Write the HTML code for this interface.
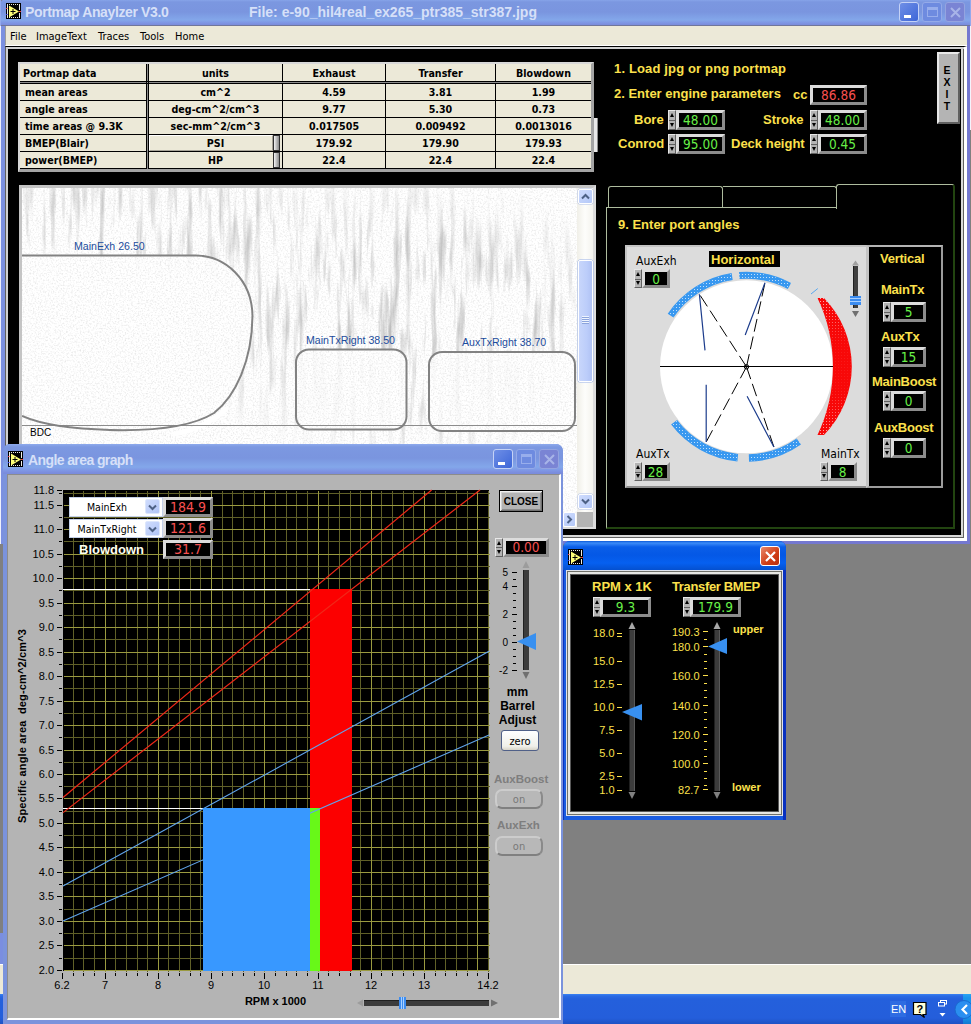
<!DOCTYPE html>
<html><head><meta charset="utf-8"><title>Portmap Anaylzer V3.0</title>
<style>
*{box-sizing:border-box;margin:0;padding:0}
html,body{width:971px;height:1024px;overflow:hidden;background:#808080}
body{position:relative;font-family:"DejaVu Sans Condensed","Liberation Sans",sans-serif;font-size:11px;color:#000}
.a{position:absolute}
.t{position:absolute;white-space:nowrap;line-height:1}
.lb{font-family:"Liberation Sans",sans-serif;font-weight:bold}
.tc{background:#ece9d8;font-family:"DejaVu Sans Condensed","Liberation Sans",sans-serif;font-weight:bold;font-size:10.600px;white-space:nowrap;overflow:hidden}
.y{color:#fce04c}
.num{position:absolute;background:#000;border:3px solid;border-color:#dcdcdc #8c8c8c #8c8c8c #dcdcdc;text-align:center;white-space:nowrap;overflow:hidden;font-size:13.500px;line-height:14px}
.g{color:#68f048}
.r{color:#f85050}
.spin{position:absolute;width:8px;background:#b4b4b4;border:1px solid;border-color:#e8e8e8 #606060 #606060 #e8e8e8}
.spin:before,.spin:after{content:"";position:absolute;left:0.500px;border-left:2.500px solid transparent;border-right:2.500px solid transparent}
.spin:before{top:2px;border-bottom:4px solid #000}
.spin:after{bottom:2px;border-top:4px solid #000}
.spin i{position:absolute;left:0;right:0;top:50%;height:1px;background:#606060}
/* XP window chrome */
.win{position:absolute;overflow:hidden}
.title{position:absolute;left:0;top:0;right:0}
.cap{position:absolute;white-space:nowrap;font-family:"Liberation Sans",sans-serif;font-weight:bold;font-size:14px;line-height:1}
.wb{position:absolute;width:20px;height:20px;border-radius:3px;border:1px solid #fff}
</style></head>
<body>
<!-- desktop / MDI background, status strip and taskbar -->
<div class="a" style="left:0;top:964px;width:971px;height:30px;background:#ece9d8;border-top:1px solid #fff"></div>
<div class="a" style="left:0;top:994px;width:971px;height:30px;background:linear-gradient(#3a82f2 0,#2a6ae4 2px,#2460dc 5px,#245edb 24px,#1e52c4 30px)"></div>
<div class="a" style="left:0;top:933px;width:4px;height:31px;background:#7a8ee0"></div>
<div class="a" style="left:963px;top:994px;width:8px;height:30px;background:linear-gradient(#2aa4f4 0,#1a94ec 4px,#1890e8 24px,#147ad0 30px)"></div>
<div class="a" style="left:890px;top:1001px;width:16px;height:16px;background:#2e6ce2"></div>
<div class="t" style="left:891px;top:1004px;font-size:11px;color:#fff;font-family:'Liberation Sans',sans-serif">EN</div>
<svg class="a" style="left:912px;top:1001px" width="16" height="18" viewBox="0 0 16 18"><path d="M1.500 1.500H14V13.500H11L12.500 16.500L8.500 13.500H1.500Z" fill="#ffffd8" stroke="#000" stroke-width="1.200"/><text x="7.800" y="11.500" text-anchor="middle" font-family="Liberation Sans, sans-serif" font-weight="bold" font-size="11" fill="#000">?</text></svg>
<svg class="a" style="left:937px;top:999px" width="12" height="20" viewBox="0 0 12 20"><rect x="3.500" y="1.500" width="6" height="3.500" fill="none" stroke="#fff" stroke-width="1"/><rect x="1.500" y="3.500" width="6" height="3.500" fill="#245edb" stroke="#fff" stroke-width="1"/><path d="M2.500 14h6l-3 3.500z" fill="#fff"/></svg>
<svg class="a" style="left:954px;top:999px" width="17" height="21" viewBox="954 999 17 21"><circle cx="964" cy="1009.500" r="9" fill="#2a8ef0" stroke="#1a6ad0" stroke-width="1"/><path d="M967 1005L962.500 1009.500L967 1014" fill="none" stroke="#fff" stroke-width="2.200"/></svg>
<!-- ================= MAIN WINDOW (inactive) ================= -->
<div class="win" id="mainwin" style="left:0;top:0;width:971px;height:544px">
  <div class="a" style="left:0;top:0;width:971px;height:544px;background:#808080"></div>
  <div class="a" style="left:970px;top:0;width:1px;height:130px;background:linear-gradient(#93a9ec 0,#93a9ec 26px,#f4f4fc 26px)"></div>
  <div class="a" style="left:0;top:0;width:1px;height:544px;background:linear-gradient(#93a9ec 0,#93a9ec 26px,#eef0fc 26px)"></div>
  <div class="a" style="left:1px;top:0;width:969px;height:544px;background:linear-gradient(90deg,#7b90e0 0,#7b90e0 6px,#7478d0 7px);border-radius:3px 0 0 0"></div>
  <div class="title" style="left:1px;right:1px;height:26px;border-radius:3px 0 0 0;background:linear-gradient(#86a4e9 0,#7b97e0 2px,#7a95df 12px,#83a7ea 20px,#7e94e3 23px,#7a8cdc 25px,#70769a 25px,#70769a 26px)"></div>
  <svg class="a" style="left:6px;top:3px" width="15" height="16" viewBox="0 0 15 16"><rect width="15" height="16" fill="#000"/><rect x="1" y="1" width="1" height="14" fill="#ecece4"/><path d="M3 1.500H14M3 14.500H14" stroke="#ecece4" stroke-width="1" stroke-dasharray="1 1" fill="none"/><rect x="13" y="1" width="1" height="6" fill="#ecece4"/><rect x="13" y="10" width="1" height="5" fill="#ecece4"/><path d="M3 2.500L13 8.500L3 14.500Z" fill="#ffff78"/><path d="M4.500 8.500H9.500M7 6V11" stroke="#000" stroke-width="1" fill="none"/><rect x="0" y="5" width="1.500" height="1" fill="#e83838"/><rect x="0" y="11" width="1.500" height="1" fill="#3030d0"/><rect x="13" y="8" width="2" height="1" fill="#e83838"/></svg>
  <div class="cap" style="left:25px;top:5px;color:#d6e0f8;letter-spacing:-0.37px">Portmap Anaylzer V3.0</div>
  <div class="cap" style="left:249px;top:5px;color:#d6e0f8;letter-spacing:0">File: e-90_hil4real_ex265_ptr385_str387.jpg</div>
  <div class="wb" style="left:899px;top:2px;border-color:#c4d2f6;background:linear-gradient(135deg,#6f8fe6,#3d66d8)"><div class="a" style="left:4px;top:12px;width:7px;height:3px;background:#fff"></div></div>
  <div class="wb" style="left:922px;top:2px;background:#6e8be0;border-color:#94aae8"><div class="a" style="left:4px;top:4px;width:11px;height:10px;border:1px solid #98aeec;border-top-width:3px"></div></div>
  <div class="wb" style="left:945px;top:2px;background:#7a84d4;border-color:#94a4e0"><svg class="a" style="left:3px;top:3px" width="13" height="13"><path d="M2 2L11 11M11 2L2 11" stroke="#a8b4e8" stroke-width="2"/></svg></div>
  <!-- menu bar -->
  <div class="a" style="left:5px;top:26px;width:962px;height:20px;background:#ece9d8;border-bottom:1px solid #fff;border-left:1px solid #9c9c9c"></div>
  <div class="t" style="left:10px;top:31px;font-size:11px">File</div>
  <div class="t" style="left:36px;top:31px;font-size:11px">ImageText</div>
  <div class="t" style="left:98px;top:31px;font-size:11px">Traces</div>
  <div class="t" style="left:140px;top:31px;font-size:11px">Tools</div>
  <div class="t" style="left:175px;top:31px;font-size:11px">Home</div>
  <!-- client -->
  <div class="a" id="client" style="left:5px;top:46px;width:962px;height:495px;background:#000;border-style:solid;border-width:1px 3px 3px 1px;border-color:#000 #fff #fff #606060;box-shadow:inset 2px 2px 0 #d0d0d0,inset -1px -1px 0 #606060,inset -3px -3px 0 #d8d8d8"></div>

  <!-- data table -->
  <div class="a" style="left:18px;top:62px;width:576px;height:110px;background:#000;border:2px solid;border-color:#d8d8d8 #a4a4a4 #a4a4a4 #d8d8d8;border-right-width:3px;border-bottom-width:3px"></div>
  <div class="a" style="left:146px;top:64px;width:3px;height:105px;background:#8c8c8c"></div><div class="a" style="left:20px;top:81px;width:571px;height:3px;background:#8c8c8c"></div>
  <div class="a" style="left:146px;top:64px;width:1px;height:105px;background:#000"></div><div class="a" style="left:148px;top:64px;width:1px;height:105px;background:#000"></div><div class="a" style="left:20px;top:81px;width:571px;height:1px;background:#000"></div><div class="a" style="left:20px;top:83px;width:571px;height:1px;background:#000"></div>
  <div class="a tc" style="left:20px;top:64px;width:126px;height:17px;text-align:left;padding-left:3px;line-height:18px">Portmap data</div>
  <div class="a tc" style="left:149px;top:64px;width:133px;height:17px;text-align:center;line-height:18px">units</div>
  <div class="a tc" style="left:283px;top:64px;width:102px;height:17px;text-align:center;line-height:18px">Exhaust</div>
  <div class="a tc" style="left:386px;top:64px;width:109px;height:17px;text-align:center;line-height:18px">Transfer</div>
  <div class="a tc" style="left:496px;top:64px;width:95px;height:17px;text-align:center;line-height:18px">Blowdown</div>
  <div class="a tc" style="left:20px;top:84px;width:126px;height:16px;text-align:left;padding-left:5px;line-height:17px">mean areas</div>
  <div class="a tc" style="left:149px;top:84px;width:133px;height:16px;text-align:center;line-height:17px">cm^2</div>
  <div class="a tc" style="left:283px;top:84px;width:102px;height:16px;text-align:center;line-height:17px">4.59</div>
  <div class="a tc" style="left:386px;top:84px;width:109px;height:16px;text-align:center;line-height:17px">3.81</div>
  <div class="a tc" style="left:496px;top:84px;width:95px;height:16px;text-align:center;line-height:17px">1.99</div>
  <div class="a tc" style="left:20px;top:101px;width:126px;height:16px;text-align:left;padding-left:5px;line-height:17px">angle areas</div>
  <div class="a tc" style="left:149px;top:101px;width:133px;height:16px;text-align:center;line-height:17px">deg-cm^2/cm^3</div>
  <div class="a tc" style="left:283px;top:101px;width:102px;height:16px;text-align:center;line-height:17px">9.77</div>
  <div class="a tc" style="left:386px;top:101px;width:109px;height:16px;text-align:center;line-height:17px">5.30</div>
  <div class="a tc" style="left:496px;top:101px;width:95px;height:16px;text-align:center;line-height:17px">0.73</div>
  <div class="a tc" style="left:20px;top:118px;width:126px;height:16px;text-align:left;padding-left:5px;line-height:17px">time areas @ 9.3K</div>
  <div class="a tc" style="left:149px;top:118px;width:133px;height:16px;text-align:center;line-height:17px">sec-mm^2/cm^3</div>
  <div class="a tc" style="left:283px;top:118px;width:102px;height:16px;text-align:center;line-height:17px">0.017505</div>
  <div class="a tc" style="left:386px;top:118px;width:109px;height:16px;text-align:center;line-height:17px">0.009492</div>
  <div class="a tc" style="left:496px;top:118px;width:95px;height:16px;text-align:center;line-height:17px">0.0013016</div>
  <div class="a tc" style="left:20px;top:135px;width:126px;height:16px;text-align:left;padding-left:5px;line-height:17px">BMEP(Blair)</div>
  <div class="a tc" style="left:149px;top:135px;width:133px;height:16px;text-align:center;line-height:17px">PSI</div>
  <div class="a tc" style="left:283px;top:135px;width:102px;height:16px;text-align:center;line-height:17px">179.92</div>
  <div class="a tc" style="left:386px;top:135px;width:109px;height:16px;text-align:center;line-height:17px">179.90</div>
  <div class="a tc" style="left:496px;top:135px;width:95px;height:16px;text-align:center;line-height:17px">179.93</div>
  <div class="a tc" style="left:20px;top:152px;width:126px;height:16px;text-align:left;padding-left:5px;line-height:17px">power(BMEP)</div>
  <div class="a tc" style="left:149px;top:152px;width:133px;height:16px;text-align:center;line-height:17px">HP</div>
  <div class="a tc" style="left:283px;top:152px;width:102px;height:16px;text-align:center;line-height:17px">22.4</div>
  <div class="a tc" style="left:386px;top:152px;width:109px;height:16px;text-align:center;line-height:17px">22.4</div>
  <div class="a tc" style="left:496px;top:152px;width:95px;height:16px;text-align:center;line-height:17px">22.4</div>
  <div class="a" style="left:273px;top:135px;width:7px;height:16px;background:linear-gradient(90deg,#f4f4f4 0,#c8c8c8 2px,#8c8c8c 5px,#404040 7px);border:1px solid #303030"></div>
  <div class="a" style="left:273px;top:152px;width:7px;height:16px;background:linear-gradient(90deg,#f4f4f4 0,#c8c8c8 2px,#8c8c8c 5px,#404040 7px);border:1px solid #303030"></div>
  <div class="a" style="left:149px;top:135px;width:124px;height:16px;border:1px solid;border-color:#fff #a8a498 #a8a498 #fff;pointer-events:none"></div>
  <div class="a" style="left:594px;top:118px;width:4px;height:34px;background:#e8e8e8;border-right:1px solid #8c8c8c"></div>
  <!-- right-side parameter labels -->
  <div class="t lb y" style="left:614px;top:62px;font-size:13px;letter-spacing:0.15px">1. Load jpg or png portmap</div>
  <div class="t lb y" style="left:614px;top:87px;font-size:13px">2. Enter engine parameters</div>
  <div class="t lb y" style="left:793px;top:88px;font-size:13px">cc</div>
  <div class="num r" style="left:810px;top:85px;width:57px;height:20px">86.86</div>
  <div class="t lb y" style="left:634px;top:113px;font-size:13px">Bore</div>
  <div class="spin" style="left:668px;top:110px;height:20px"><i></i></div>
  <div class="num g" style="left:676px;top:110px;width:49px;height:20px">48.00</div>
  <div class="t lb y" style="left:763px;top:113px;font-size:13px">Stroke</div>
  <div class="spin" style="left:810px;top:110px;height:20px"><i></i></div>
  <div class="num g" style="left:818px;top:110px;width:49px;height:20px">48.00</div>
  <div class="t lb y" style="left:618px;top:137px;font-size:13px">Conrod</div>
  <div class="spin" style="left:668px;top:134px;height:20px"><i></i></div>
  <div class="num g" style="left:676px;top:134px;width:49px;height:20px">95.00</div>
  <div class="t lb y" style="left:731px;top:137px;font-size:13px">Deck height</div>
  <div class="spin" style="left:810px;top:134px;height:20px"><i></i></div>
  <div class="num g" style="left:818px;top:134px;width:49px;height:20px">0.45</div>
  <!-- EXIT button -->
  <div class="a lb" style="left:937px;top:52px;width:23px;height:72px;background:#b4b4b4;border:2px solid;border-color:#e8e8e8 #606060 #606060 #e8e8e8;font-size:10.500px;line-height:12px;text-align:center;padding-top:10px;padding-right:3px">E<br>X<br>I<br>T</div>

  <!-- tab control -->
  <div class="a" style="left:608px;top:186px;width:115px;height:22px;border:1px solid #aebc9e;border-bottom:0;border-radius:3px 3px 0 0"></div>
  <div class="a" style="left:723px;top:186px;width:114px;height:22px;border:1px solid #aebc9e;border-bottom:0;border-left:0;border-radius:0 3px 0 0"></div>
  <div class="a" style="left:606px;top:207px;width:349px;height:322px;border:1px solid #aebc9e;border-right:2px solid #224410;border-bottom:2px solid #224410"></div>
  <div class="a" style="left:836px;top:184px;width:119px;height:25px;background:#000;border:1px solid #aebc9e;border-bottom:0;border-right:2px solid #224410;border-radius:3px 3px 0 0"></div>
  <div class="t lb y" style="left:618px;top:218px;font-size:13px">9. Enter port angles</div>
  <!-- port angle panel -->
  <div class="a" style="left:625px;top:245px;width:318px;height:243px;background:#dcdcdc;border:2px solid;border-color:#c4c4c4 #8c8c8c #8c8c8c #c4c4c4"></div>
  <div class="a" style="left:866px;top:245px;width:77px;height:243px;background:#000;border:2px solid;border-left-width:3px;border-color:#b4b4b4 #9c9c9c #9c9c9c #c4c4c4"></div>
  <svg class="a" style="left:625px;top:245px" width="245" height="243" viewBox="625 245 245 243">
<defs><pattern id="dots" width="3" height="3" patternUnits="userSpaceOnUse"><rect x="1" y="1" width="1" height="1" fill="#fff"/></pattern><linearGradient id="rfade" x1="0" y1="0" x2="0" y2="1"><stop offset="0" stop-color="#fff"/><stop offset="0.35" stop-color="#fff" stop-opacity="0.1"/><stop offset="0.65" stop-color="#fff" stop-opacity="0.1"/><stop offset="1" stop-color="#fff"/></linearGradient><mask id="rm" maskUnits="userSpaceOnUse" x="810" y="295" width="50" height="145"><rect x="810" y="295" width="50" height="145" fill="url(#rfade)"/></mask></defs>
<circle cx="746.5" cy="366.8" r="86.5" fill="#fff"/>
<path d="M731.6 273.0A95 95 0 0 0 667.7 313.7L673.5 317.6A88 88 0 0 1 732.7 279.9Z" fill="#3898f0"/>
<path d="M791.1 282.9A95 95 0 0 0 739.0 272.1L739.6 279.1A88 88 0 0 1 787.8 289.1Z" fill="#3898f0"/>
<path d="M671.1 424.6A95 95 0 0 0 737.4 461.4L738.1 453.9A87.5 87.5 0 0 1 677.1 420.1Z" fill="#3898f0"/>
<path d="M749.0 461.8A95 95 0 0 0 801.0 444.6L796.7 438.5A87.5 87.5 0 0 1 748.8 454.3Z" fill="#3898f0"/>
<path opacity="0.7" d="M731.8 274.0A94 94 0 0 0 668.6 314.2L672.7 317.0A89 89 0 0 1 732.6 278.9Z" fill="url(#dots)"/>
<path opacity="0.7" d="M790.6 283.8A94 94 0 0 0 739.1 273.1L739.5 278.1A89 89 0 0 1 788.3 288.2Z" fill="url(#dots)"/>
<path opacity="0.7" d="M671.9 424.0A94 94 0 0 0 737.5 460.4L738.0 454.9A88.5 88.5 0 0 1 676.3 420.7Z" fill="url(#dots)"/>
<path opacity="0.7" d="M749.0 460.8A94 94 0 0 0 800.4 443.8L797.3 439.3A88.5 88.5 0 0 1 748.8 455.3Z" fill="url(#dots)"/>
<path d="M817.5 298A160 160 0 0 1 817.5 435L824 435A98.3 98.3 0 0 0 824 298Z" fill="#f80808"/>
<path d="M817.5 298A160 160 0 0 1 817.5 435L824 435A98.3 98.3 0 0 0 824 298Z" fill="url(#dots)" opacity="0.75" mask="url(#rm)"/>
<path d="M660 366.5H833" stroke="#000" stroke-width="1"/>
<g stroke="#000" stroke-width="1" stroke-dasharray="13 5" fill="none"><path d="M746.5 366.8L699.4 294.2M746.5 366.8L765 282.7M746.5 366.8L706.2 442M746.5 366.8L773.9 447"/></g>
<g stroke="#1c3c8c" stroke-width="1.2" fill="none"><path d="M699.4 294.2L705 350.4M765 282.7L745.2 335M706.2 442V384.7M773.9 447L747.1 396.2"/></g>
<path d="M811 294L817.8 288.5" stroke="#58a8f0" stroke-width="1"/>
<circle cx="746.5" cy="366.8" r="2.2" fill="none" stroke="#000" stroke-width="1"/>
<rect x="853" y="266" width="5" height="42" fill="#404040"/><rect x="853" y="266" width="1" height="42" fill="#202020"/>
<path d="M855.5 260.5l3.5 5h-7z" fill="#a0a0a0"/><path d="M855.5 317l3.5 -6h-7z" fill="#707070"/>
<rect x="850" y="296" width="11" height="9" fill="#3c8cf0"/><path d="M850 298.5h11M850 301.5h11" stroke="#a8d0ff" stroke-width="1"/>
</svg>
  <div class="t" style="left:636px;top:255px;font-size:12px">AuxExh</div>
  <div class="spin" style="left:634px;top:269px;height:19px"><i></i></div>
  <div class="num g" style="left:642px;top:269px;width:28px;height:19px">0</div>
  <div class="t lb y" style="left:709px;top:251px;font-size:13px;background:#000;padding:1.500px 5px 2px 2px;height:16px">Horizontal</div>
  <div class="t" style="left:636px;top:448px;font-size:12px">AuxTx</div>
  <div class="spin" style="left:634px;top:462px;height:19px"><i></i></div>
  <div class="num g" style="left:641.5px;top:462px;width:28px;height:19px">28</div>
  <div class="t" style="left:821px;top:448px;font-size:12px">MainTx</div>
  <div class="spin" style="left:820px;top:462px;height:19px"><i></i></div>
  <div class="num g" style="left:828px;top:462px;width:29px;height:19px">8</div>
  <div class="t lb y" style="left:880px;top:252px;font-size:13px;letter-spacing:-0.250px">Vertical</div>
  <div class="t lb y" style="left:881px;top:283px;font-size:13px;letter-spacing:-0.250px">MainTx</div>
  <div class="spin" style="left:883px;top:302px;height:20px"><i></i></div>
  <div class="num g" style="left:891px;top:302px;width:35px;height:20px">5</div>
  <div class="t lb y" style="left:881px;top:330px;font-size:13px;letter-spacing:-0.250px">AuxTx</div>
  <div class="spin" style="left:883px;top:347px;height:20px"><i></i></div>
  <div class="num g" style="left:891px;top:347px;width:35px;height:20px">15</div>
  <div class="t lb y" style="left:872px;top:375px;font-size:13px;letter-spacing:-0.250px">MainBoost</div>
  <div class="spin" style="left:883px;top:391px;height:20px"><i></i></div>
  <div class="num g" style="left:891px;top:391px;width:35px;height:20px">0</div>
  <div class="t lb y" style="left:874px;top:421px;font-size:13px;letter-spacing:-0.250px">AuxBoost</div>
  <div class="spin" style="left:883px;top:438px;height:20px"><i></i></div>
  <div class="num g" style="left:891px;top:438px;width:35px;height:20px">0</div>
  <!-- portmap image panel -->
  <div class="a" style="left:19px;top:185px;width:577px;height:344px;background:#fff;border-style:solid;border-width:3px 3px 2px 3px;border-color:#c4c4c4 #dcdcdc #dcdcdc #c4c4c4"></div>
  <svg class="a" style="left:22px;top:188px" width="555" height="324" viewBox="22 188 555 324">
    <defs>
      <filter id="nz" x="0" y="0" width="100%" height="100%"><feTurbulence type="fractalNoise" baseFrequency="0.16 0.014" numOctaves="3" seed="11"/><feColorMatrix type="matrix" values="0 0 0 0 0.42  0 0 0 0 0.42  0 0 0 0 0.42  0 0 0 3 -1.45"/></filter>
      <filter id="nz2" x="0" y="0" width="100%" height="100%"><feTurbulence type="fractalNoise" baseFrequency="0.6" numOctaves="2" seed="3"/><feColorMatrix type="matrix" values="0 0 0 0 0.5  0 0 0 0 0.5  0 0 0 0 0.5  0 0 0 1.7 -0.78"/></filter>
      <radialGradient id="fg" cx="0.5" cy="0.5" r="0.5"><stop offset="0" stop-color="#fff"/><stop offset="0.55" stop-color="#fff" stop-opacity="0.85"/><stop offset="1" stop-color="#fff" stop-opacity="0"/></radialGradient>
      <mask id="mk" maskUnits="userSpaceOnUse" x="22" y="188" width="555" height="324"><ellipse cx="400" cy="320" rx="240" ry="150" fill="url(#fg)"/><ellipse cx="150" cy="222" rx="210" ry="62" fill="url(#fg)" opacity="0.85"/></mask>
    </defs>
    <rect x="22" y="188" width="555" height="324" fill="#fff"/>
    <g mask="url(#mk)"><rect x="22" y="188" width="555" height="324" filter="url(#nz)" opacity="0.8"/></g>
    <g fill="#fff" opacity="0.88">
      <path d="M22 255.500H196C226 256 252 280 252.500 316C252 360 236 396 214 413C190 428 150 431 110 430C70 429 40 424 22 416Z"/>
      <rect x="296" y="349.500" width="110.500" height="80" rx="13" ry="13"/>
      <rect x="429" y="352" width="146" height="79" rx="13" ry="13"/>
    </g>
    <rect x="22" y="188" width="555" height="324" filter="url(#nz2)" opacity="0.5"/>
    <path d="M175 434C195 430 212 422 226 409" fill="none" stroke="#fff" stroke-width="5" stroke-linecap="round"/>
    <path d="M22 425.500H577" stroke="#8c8c8c" stroke-width="1"/>
    <g fill="none" stroke="#828282" stroke-width="2">
      <path d="M22 255.500H196C226 256 252 280 252.500 316C252 360 236 396 214 413C190 428 150 431 110 430C70 429 40 424 22 416"/>
      <rect x="296" y="349.500" width="110.500" height="80" rx="13" ry="13"/>
      <rect x="429" y="352" width="146" height="79" rx="13" ry="13"/>
    </g>
    <g font-family="Liberation Sans, sans-serif" font-size="10.600" fill="#1c4c9c">
      <text x="74" y="250">MainExh 26.50</text>
      <text x="306" y="344">MainTxRight 38.50</text>
      <text x="462" y="346">AuxTxRight 38.70</text>
    </g>
    <text x="30" y="436" font-family="Liberation Sans, sans-serif" font-size="10" fill="#000">BDC</text>
  </svg>
  <!-- vertical scrollbar -->
  <div class="a" style="left:577px;top:188px;width:16px;height:324px;background:linear-gradient(90deg,#f0efe8,#fdfdfb 50%,#f4f3ee)"></div>
  <div class="a" style="left:578px;top:189px;width:15px;height:15px;border-radius:2px;border:1px solid #fff;background:linear-gradient(135deg,#cfdcfd,#b4c8f8);box-shadow:0 0 0 0.5px #b0c0e8"></div>
  <svg class="a" style="left:581px;top:193px" width="9" height="7"><path d="M1 5.500L4.500 2L8 5.500" fill="none" stroke="#4d6185" stroke-width="2"/></svg>
  <div class="a" style="left:578px;top:260px;width:15px;height:122px;border-radius:2px;border:1px solid #fff;background:linear-gradient(90deg,#c8d6fb,#bccdfa 60%,#b0c2f4);box-shadow:0 0 0 0.5px #98b0e8"></div>
  <div class="a" style="left:582px;top:316px;width:7px;height:8px;background:repeating-linear-gradient(#eef4fe 0,#eef4fe 1px,#8ca4dc 1px,#8ca4dc 2px)"></div>
  <div class="a" style="left:578px;top:494px;width:15px;height:15px;border-radius:2px;border:1px solid #fff;background:linear-gradient(135deg,#cfdcfd,#b4c8f8);box-shadow:0 0 0 0.5px #b0c0e8"></div>
  <svg class="a" style="left:581px;top:498px" width="9" height="7"><path d="M1 1.500L4.500 5L8 1.500" fill="none" stroke="#4d6185" stroke-width="2"/></svg>
  <!-- horizontal scrollbar remnant + corner -->
  <div class="a" style="left:22px;top:512px;width:555px;height:15px;background:#f4f3ee"></div>
  <div class="a" style="left:563px;top:512px;width:13px;height:15px;border-radius:2px;border:1px solid #fff;background:linear-gradient(135deg,#cfdcfd,#b4c8f8)"></div>
  <svg class="a" style="left:566px;top:515px" width="7" height="9"><path d="M1.500 1L5 4.500L1.500 8" fill="none" stroke="#4d6185" stroke-width="2"/></svg>
  <div class="a" style="left:577px;top:512px;width:16px;height:15px;background:#b4b4b4"></div>
</div><!-- /mainwin -->
<!-- ================= ANGLE AREA GRAPH WINDOW (inactive) ================= -->
<div class="win" id="graphwin" style="left:3px;top:444px;width:560px;height:580px;background:#7b93dc;border-radius:7px 7px 0 0">
  <div class="title" style="height:30px;background:linear-gradient(#8eaaec 0,#7c98e1 3px,#7a95df 14px,#83a7ea 23px,#7e94e3 27px,#7a8cdc 29px)"></div>
  <svg class="a" style="left:5px;top:7px" width="15" height="16" viewBox="0 0 15 16"><rect width="15" height="16" fill="#000"/><rect x="1" y="1" width="1" height="14" fill="#ecece4"/><path d="M3 1.500H14M3 14.500H14" stroke="#ecece4" stroke-width="1" stroke-dasharray="1 1" fill="none"/><rect x="13" y="1" width="1" height="6" fill="#ecece4"/><rect x="13" y="10" width="1" height="5" fill="#ecece4"/><path d="M3 2.500L13 8.500L3 14.500Z" fill="#ffff78"/><path d="M4.500 8.500H9.500M7 6V11" stroke="#000" stroke-width="1" fill="none"/><rect x="0" y="5" width="1.500" height="1" fill="#e83838"/><rect x="0" y="11" width="1.500" height="1" fill="#3030d0"/><rect x="13" y="8" width="2" height="1" fill="#e83838"/></svg>
  <div class="cap" style="left:25px;top:9px;color:#d6e0f8;letter-spacing:-0.6px">Angle area graph</div>
  <div class="wb" style="left:490px;top:5px;border-color:#c4d2f6;background:linear-gradient(135deg,#6f8fe6,#3d66d8)"><div class="a" style="left:4px;top:12px;width:7px;height:3px;background:#fff"></div></div>
  <div class="wb" style="left:513px;top:5px;background:#6e8be0;border-color:#94aae8"><div class="a" style="left:4px;top:4px;width:11px;height:10px;border:1px solid #98aeec;border-top-width:3px"></div></div>
  <div class="wb" style="left:536px;top:5px;background:#7a84d4;border-color:#94a4e0"><svg class="a" style="left:3px;top:3px" width="13" height="13"><path d="M2 2L11 11M11 2L2 11" stroke="#a8b4e8" stroke-width="2"/></svg></div>
  <div class="a" style="left:4px;top:30px;width:554px;height:546px;background:#b4b4b4;border-style:solid;border-width:1px 2px 2px 1px;border-color:#8c8c8c #fff #fff #8c8c8c"></div>
</div>
<svg class="a" style="left:0;top:474px" width="564" height="546" viewBox="0 474 564 546" xml:space="preserve" font-family="Liberation Sans, sans-serif" font-size="11">
<rect x="63" y="490" width="426" height="481" fill="#000"/>
<g shape-rendering="crispEdges" fill="none" stroke-width="1" transform="translate(0.5,0.5)"><path stroke="#606028" d="M73 490V971M83 490V971M94 490V971M115 490V971M126 490V971M137 490V971M147 490V971M168 490V971M179 490V971M190 490V971M200 490V971M222 490V971M232 490V971M243 490V971M254 490V971M275 490V971M286 490V971M296 490V971M307 490V971M328 490V971M339 490V971M350 490V971M360 490V971M381 490V971M392 490V971M403 490V971M413 490V971M435 490V971M445 490V971M456 490V971M467 490V971M488 490V971M63 958H489M63 933H489M63 909H489M63 884H489M63 860H489M63 835H489M63 811H489M63 786H489M63 762H489M63 737H489M63 713H489M63 688H489M63 664H489M63 639H489M63 615H489M63 590H489M63 566H489M63 541H489M63 517H489M63 493H489"/><path stroke="#9a9a40" d="M105 490V971M158 490V971M211 490V971M264 490V971M318 490V971M371 490V971M424 490V971M477 490V971M63 970H489M63 945H489M63 921H489M63 896H489M63 872H489M63 847H489M63 823H489M63 798H489M63 774H489M63 750H489M63 725H489M63 701H489M63 676H489M63 652H489M63 627H489M63 603H489M63 578H489M63 554H489M63 529H489M63 505H489"/></g>
<g shape-rendering="crispEdges">
<rect x="310" y="589" width="42" height="382" fill="#fc0000"/>
<rect x="310" y="808" width="10" height="163" fill="#68f818"/>
<rect x="63" y="589" width="247" height="1" fill="#fff"/>
<rect x="63" y="808" width="140" height="1" fill="#fff"/>
</g>
<g clip-path="none">
<path d="M63.0 797.5L431.6 490.0" stroke="#f02818" stroke-width="1.2" fill="none"/>
<path d="M63.0 812.6L480.0 490.0" stroke="#f02818" stroke-width="1.2" fill="none"/>
<path d="M63.0 886.0L489.0 651.3" stroke="#60a4ec" stroke-width="1.1" fill="none"/>
<path d="M63.0 921.0L489.0 735.0" stroke="#60a4ec" stroke-width="1.1" fill="none"/>
</g>
<rect x="203" y="808" width="107" height="163" fill="#3898ff" shape-rendering="crispEdges"/>
<text x="54" y="974" text-anchor="end">2.0</text>
<text x="54" y="949" text-anchor="end">2.5</text>
<text x="54" y="925" text-anchor="end">3.0</text>
<text x="54" y="900" text-anchor="end">3.5</text>
<text x="54" y="876" text-anchor="end">4.0</text>
<text x="54" y="851" text-anchor="end">4.5</text>
<text x="54" y="827" text-anchor="end">5.0</text>
<text x="54" y="802" text-anchor="end">5.5</text>
<text x="54" y="778" text-anchor="end">6.0</text>
<text x="54" y="754" text-anchor="end">6.5</text>
<text x="54" y="729" text-anchor="end">7.0</text>
<text x="54" y="705" text-anchor="end">7.5</text>
<text x="54" y="680" text-anchor="end">8.0</text>
<text x="54" y="656" text-anchor="end">8.5</text>
<text x="54" y="631" text-anchor="end">9.0</text>
<text x="54" y="607" text-anchor="end">9.5</text>
<text x="54" y="582" text-anchor="end">10.0</text>
<text x="54" y="558" text-anchor="end">10.5</text>
<text x="54" y="533" text-anchor="end">11.0</text>
<text x="54" y="509" text-anchor="end">11.5</text>
<text x="54" y="494" text-anchor="end">11.8</text>
<text x="62" y="989" text-anchor="middle">6.2</text>
<text x="105" y="989" text-anchor="middle">7</text>
<text x="158" y="989" text-anchor="middle">8</text>
<text x="211" y="989" text-anchor="middle">9</text>
<text x="264" y="989" text-anchor="middle">10</text>
<text x="318" y="989" text-anchor="middle">11</text>
<text x="371" y="989" text-anchor="middle">12</text>
<text x="424" y="989" text-anchor="middle">13</text>
<text x="488" y="989" text-anchor="middle">14.2</text>
<path shape-rendering="crispEdges" transform="translate(0.5,0.5)" stroke="#000" stroke-width="1" fill="none" d="M56 970H61M58 958H61M56 945H61M58 933H61M56 921H61M58 909H61M56 896H61M58 884H61M56 872H61M58 860H61M56 847H61M58 835H61M56 823H61M58 811H61M56 798H61M58 786H61M56 774H61M58 762H61M56 750H61M58 737H61M56 725H61M58 713H61M56 701H61M58 688H61M56 676H61M58 664H61M56 652H61M58 639H61M56 627H61M58 615H61M56 603H61M58 590H61M56 578H61M58 566H61M56 554H61M58 541H61M56 529H61M58 517H61M56 505H61M58 493H61M56 490H61M62 972V978M73 972V975M83 972V975M94 972V975M105 972V978M115 972V975M126 972V975M137 972V975M147 972V975M158 972V978M168 972V975M179 972V975M190 972V975M200 972V975M211 972V978M222 972V975M232 972V975M243 972V975M254 972V975M264 972V978M275 972V975M286 972V975M296 972V975M307 972V975M318 972V978M328 972V975M339 972V975M350 972V975M360 972V975M371 972V978M381 972V975M392 972V975M403 972V975M413 972V975M424 972V978M435 972V975M445 972V975M456 972V975M467 972V975M477 972V975M488 972V978"/>
<text x="275.5" y="1005" text-anchor="middle" font-weight="bold">RPM x 1000</text>
<text transform="translate(25.700,726) rotate(-90)" text-anchor="middle" font-weight="bold" letter-spacing="0.150">Specific angle area&#160; deg-cm^2/cm^3</text>
<rect x="364" y="1000" width="125" height="6" fill="#3c3c3c"/><rect x="364" y="1000" width="125" height="1" fill="#202020"/>
<path d="M357 1003l6 -3.500v7z" fill="#9c9c9c"/><path d="M498 1003l-7 -3.500v7z" fill="#707070"/>
<rect x="399" y="997" width="7" height="12" fill="#3c8cf0"/><path d="M401.500 997v12M403.500 997v12" stroke="#a8d0ff" stroke-width="1"/>
<rect x="523" y="570" width="6" height="100" fill="#3c3c3c"/><rect x="523" y="570" width="1" height="100" fill="#202020"/>
<path d="M526 561l3.500 7h-7z" fill="#9c9c9c"/><path d="M526 679l3.500 -7h-7z" fill="#707070"/>
<text x="508" y="576" text-anchor="end" font-size="10">5</text>
<text x="508" y="590" text-anchor="end" font-size="10">4</text>
<text x="508" y="618" text-anchor="end" font-size="10">2</text>
<text x="508" y="646" text-anchor="end" font-size="10">0</text>
<text x="508" y="674" text-anchor="end" font-size="10">-2</text>
<path shape-rendering="crispEdges" transform="translate(0.5,0.5)" stroke="#000" stroke-width="1" fill="none" d="M511 572H516M512 579H515M511 586H516M512 593H515M512 600H515M512 607H515M511 614H516M512 621H515M512 628H515M512 635H515M511 642H516M512 649H515M512 656H515M512 663H515M511 670H516"/>
<path d="M517 641.500L536 633V650Z" fill="#3890f0"/>
</svg>
<div class="a" style="left:69px;top:497px;width:94px;height:19.500px;background:#fff;border:1px solid #c4d0e8"></div>
<div class="t" style="left:70px;top:502px;width:74px;text-align:center;font-size:10.500px">MainExh</div>
<div class="a" style="left:145px;top:499px;width:15px;height:15px;border-radius:2px;background:linear-gradient(135deg,#cfdcfd,#b0c4f6);border:1px solid #dce6fc"></div>
<svg class="a" style="left:148px;top:504px" width="9" height="7"><path d="M1 1.500L4.500 5L8 1.500" fill="none" stroke="#4d6185" stroke-width="2"/></svg>
<div class="a" style="left:69px;top:518.5px;width:94px;height:19.500px;background:#fff;border:1px solid #c4d0e8"></div>
<div class="t" style="left:70px;top:523.5px;width:74px;text-align:center;font-size:10.500px">MainTxRight</div>
<div class="a" style="left:145px;top:520.5px;width:15px;height:15px;border-radius:2px;background:linear-gradient(135deg,#cfdcfd,#b0c4f6);border:1px solid #dce6fc"></div>
<svg class="a" style="left:148px;top:525.5px" width="9" height="7"><path d="M1 1.500L4.500 5L8 1.500" fill="none" stroke="#4d6185" stroke-width="2"/></svg>
<div class="num r" style="left:163px;top:497px;width:50px;height:20px;font-size:14px;line-height:14px">184.9</div>
<div class="num r" style="left:163px;top:518px;width:50px;height:20px;font-size:14px;line-height:14px">121.6</div>
<div class="num r" style="left:163px;top:540px;width:50px;height:19px;font-size:14px;line-height:13px">31.7</div>
<div class="t lb" style="left:79px;top:543px;font-size:13px;color:#fffff0">Blowdown</div>
<div class="a lb" style="left:499px;top:490px;width:44px;height:22px;background:#b4b4b4;border:1px solid #000;box-shadow:inset 1px 1px 0 #f0f0f0,inset -1px -1px 0 #707070,inset 2px 2px 0 #d0d0d0,inset -2px -2px 0 #8c8c8c;font-size:10px;line-height:21px;text-align:center">CLOSE</div>
<div class="spin" style="left:495px;top:537.500px;height:19px"><i></i></div>
<div class="num r" style="left:503px;top:537.5px;width:46px;height:19px;font-size:13.5px;line-height:13px">0.00</div>
<div class="t lb" style="left:494.500px;top:684.500px;width:46px;text-align:center;font-size:12px;line-height:14px;white-space:normal">mm<br>Barrel<br>Adjust</div>
<div class="a" style="left:501px;top:730px;width:38px;height:21px;border-radius:3px;border:1px solid #506088;background:linear-gradient(#fff,#f0f0ea 80%,#d8d4c8);font-size:11px;line-height:21px;text-align:center">zero</div>
<div class="t lb" style="left:494px;top:774px;font-size:11.500px;color:#7e7e7e">AuxBoost</div>
<div class="a" style="left:495px;top:789px;width:48px;height:20px;border-radius:7px;background:#b8b8b8;border:2px solid;border-color:#cccccc #8a8a8a #808080 #cccccc;font-size:11px;line-height:17px;text-align:center;color:#787878">on</div>
<div class="t lb" style="left:497px;top:820px;font-size:11.500px;color:#7e7e7e">AuxExh</div>
<div class="a" style="left:495px;top:836px;width:48px;height:20px;border-radius:7px;background:#b8b8b8;border:2px solid;border-color:#cccccc #8a8a8a #808080 #cccccc;font-size:11px;line-height:17px;text-align:center;color:#787878">on</div>
<!-- ================= SMALL ACTIVE WINDOW (RPM / Transfer BMEP) ================= -->
<div class="win" id="smallwin" style="left:563px;top:541px;width:223px;height:279px;background:linear-gradient(90deg,#0830c0 0,#0830c0 1px,#1a5ce0 1px,#1a5ce0 220px,#0830c0 220px);border-radius:7px 7px 0 0">
  <div class="title" style="height:29px;background:linear-gradient(#0a58d8 0,#3c8cf8 2px,#0a5ee8 6px,#0458e6 14px,#0660f0 22px,#0450d0 29px)"></div>
  <svg class="a" style="left:5px;top:8px" width="15" height="16" viewBox="0 0 15 16"><rect width="15" height="16" fill="#000"/><rect x="1" y="1" width="1" height="14" fill="#ecece4"/><path d="M3 1.500H14M3 14.500H14" stroke="#ecece4" stroke-width="1" stroke-dasharray="1 1" fill="none"/><rect x="13" y="1" width="1" height="6" fill="#ecece4"/><rect x="13" y="10" width="1" height="5" fill="#ecece4"/><path d="M3 2.500L13 8.500L3 14.500Z" fill="#ffff78"/><path d="M4.500 8.500H9.500M7 6V11" stroke="#000" stroke-width="1" fill="none"/><rect x="0" y="5" width="1.500" height="1" fill="#e83838"/><rect x="0" y="11" width="1.500" height="1" fill="#3030d0"/><rect x="13" y="8" width="2" height="1" fill="#e83838"/></svg>
  <div class="wb" style="left:197px;top:5px;background:linear-gradient(135deg,#e8886c,#d03c14 60%,#b83010)"><svg class="a" style="left:3px;top:3px" width="13" height="13"><path d="M2 2L11 11M11 2L2 11" stroke="#fff" stroke-width="2.200"/></svg></div>
  <div class="a" style="left:3px;top:29px;width:217px;height:246px;background:#000;border:1px solid #dfe3ec;box-shadow:inset 0 0 0 1px #707068,inset 0 0 0 3px #e6e6e2,inset 0 0 0 4px #585858"></div>
</div>
<div class="t lb y" style="left:592px;top:580px;font-size:13px">RPM x 1K</div>
<div class="t lb y" style="left:672px;top:580px;font-size:13px;letter-spacing:-0.35px">Transfer BMEP</div>
<div class="spin" style="left:593px;top:597px;height:20px"><i></i></div>
<div class="num g" style="left:600px;top:597px;width:51px;height:20px;font-size:13.5px">9.3</div>
<div class="spin" style="left:683px;top:597px;height:20px"><i></i></div>
<div class="num g" style="left:690px;top:597px;width:51px;height:20px;font-size:13.5px">179.9</div>
<svg class="a" style="left:568px;top:618px" width="214" height="194" viewBox="568 618 214 194" font-family="Liberation Sans, sans-serif" font-size="11" fill="#fce04c">
<rect x="629" y="630" width="6" height="161" fill="#3c3c3c"/><rect x="629" y="630" width="1" height="161" fill="#202020"/><rect x="634" y="630" width="1" height="161" fill="#585858"/>
<path d="M632 622l3.500 7h-7z" fill="#a8a8a8"/><path d="M632 799l3.500 -7h-7z" fill="#808080"/>
<text x="614.500" y="637" text-anchor="end">18.0</text>
<text x="614.500" y="665" text-anchor="end">15.0</text>
<text x="614.500" y="688" text-anchor="end">12.5</text>
<text x="614.500" y="711" text-anchor="end">10.0</text>
<text x="614.500" y="734" text-anchor="end">7.5</text>
<text x="614.500" y="757" text-anchor="end">5.0</text>
<text x="614.500" y="780" text-anchor="end">2.5</text>
<text x="614.500" y="794" text-anchor="end">1.0</text>
<rect x="714" y="630" width="6" height="161" fill="#3c3c3c"/><rect x="714" y="630" width="1" height="161" fill="#202020"/><rect x="719" y="630" width="1" height="161" fill="#585858"/>
<path d="M717 622l3.500 7h-7z" fill="#a8a8a8"/><path d="M717 799l3.500 -7h-7z" fill="#808080"/>
<text x="699.500" y="636" text-anchor="end">190.3</text>
<text x="699.500" y="651" text-anchor="end">180.0</text>
<text x="699.500" y="680" text-anchor="end">160.0</text>
<text x="699.500" y="710" text-anchor="end">140.0</text>
<text x="699.500" y="739" text-anchor="end">120.0</text>
<text x="699.500" y="768" text-anchor="end">100.0</text>
<text x="699.500" y="794" text-anchor="end">82.7</text>
<path shape-rendering="crispEdges" transform="translate(0.5,0.5)" stroke="#fce04c" stroke-width="1" fill="none" d="M616 633H621M616 661H621M616 684H621M616 707H621M616 730H621M616 753H621M616 776H621M616 790H621M616 636H621M702 631H707M702 646H707M702 675H707M702 705H707M702 734H707M702 763H707M702 789H707M703 639H706M703 654H706M703 661H706M703 668H706M703 683H706M703 690H706M703 697H706M703 712H706M703 719H706M703 727H706M703 741H706M703 749H706M703 756H706M703 771H706M703 778H706M703 785H706"/>
<path d="M622 712L642 704V720.500Z" fill="#3890f0"/>
<path d="M708 646.500L727 638V654Z" fill="#3890f0"/>
<text x="733" y="633" font-weight="bold">upper</text><text x="732" y="791" font-weight="bold">lower</text>
</svg>
</body></html>
